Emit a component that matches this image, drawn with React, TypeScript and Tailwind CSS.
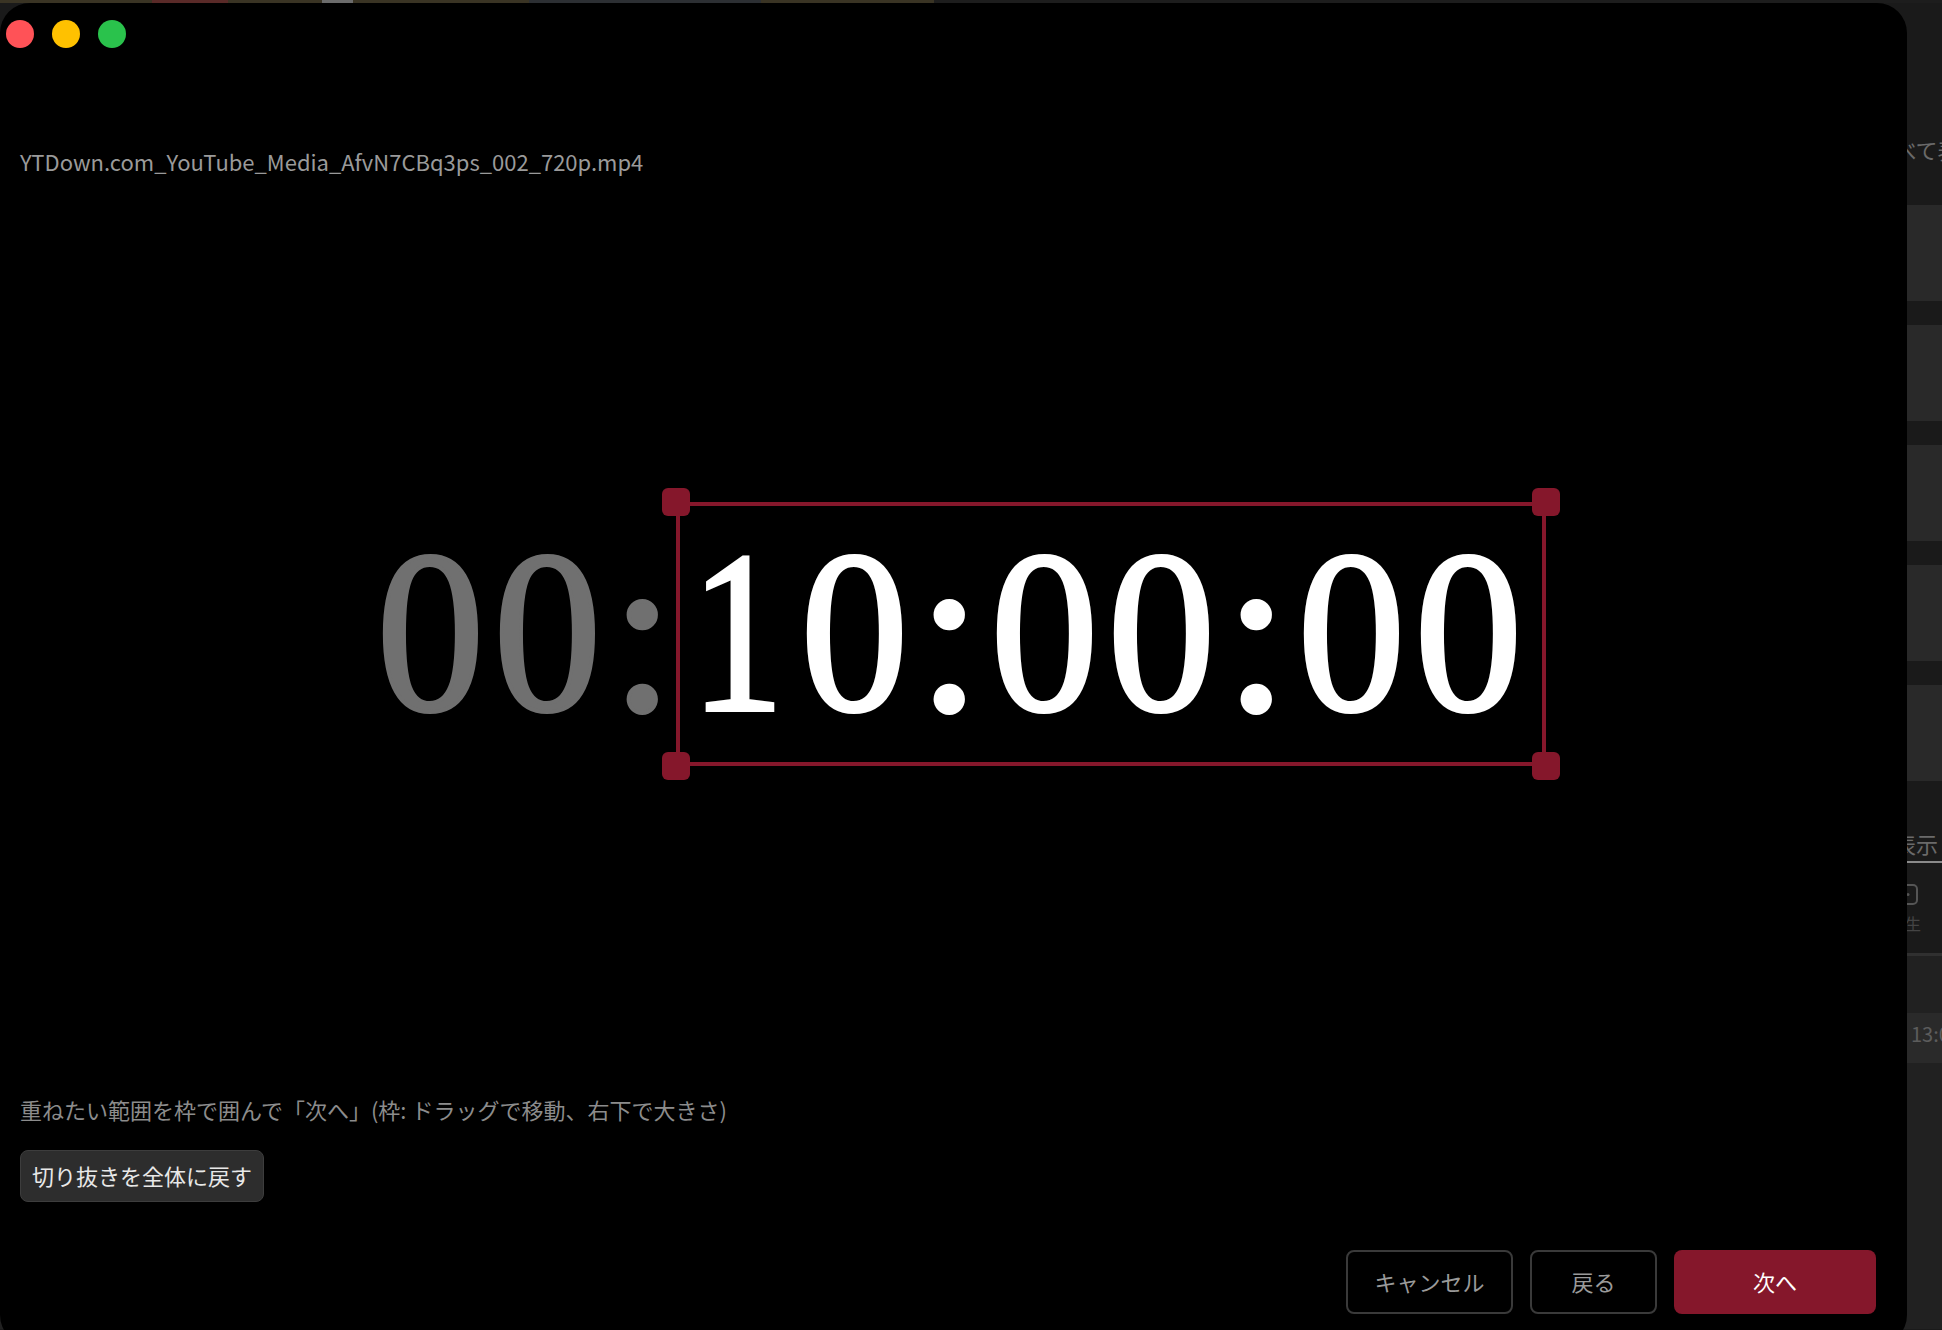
import React from "react";

const jp = "font-['Noto_Sans_CJK_JP','Noto_Sans',sans-serif]";

function Colon({ dim }: { dim?: boolean }) {
  return (
    <span className={`inline-block w-[73px] text-center [-webkit-text-stroke:4px_currentColor] ${dim ? "text-[#707070]" : "text-white"}`}>:</span>
  );
}

function Digit({ children, dim }: { children: string; dim?: boolean }) {
  return (
    <span className={`inline-block w-[117px] text-center ${children === "1" ? "scale-x-[0.8]" : "scale-x-[0.93]"} ${dim ? "text-[#707070]" : "text-white"}`}>
      {children}
    </span>
  );
}

function Handle({ className }: { className: string }) {
  return <div className={`absolute h-7 w-7 rounded-md bg-[#85172b] ${className}`} />;
}

function BackgroundApp() {
  return (
    <div className={`h-full w-full bg-[#1a1a1a] ${jp}`}>
      <div className="flex h-[3px] w-full bg-[#1d1d1d]">
        <div className="flex h-full w-[934px] bg-[#3a3424]">
          <div className="ml-[152px] h-full w-[76px] bg-[#5a2a28]" />
          <div className="ml-[94px] h-full w-[31px] bg-[#6b6b6b]" />
          <div className="ml-[176px] h-full w-[232px] bg-[#2c2f33]" />
        </div>
      </div>
      <div className="h-[202px] overflow-hidden whitespace-nowrap pl-[1874px] pt-[130px] text-[22px] leading-[32px] text-[#6a6a6a]">
        すべて表示
      </div>
      <div className="flex flex-col gap-6">
        <div className="h-24 bg-[#292929]" />
        <div className="h-24 bg-[#292929]" />
        <div className="h-24 bg-[#292929]" />
        <div className="h-24 bg-[#292929]" />
        <div className="h-24 bg-[#292929]" />
      </div>
      <div className="h-[175px] overflow-hidden whitespace-nowrap border-b-[3px] border-[#303030]">
        <div className="h-[82px] w-full overflow-hidden border-b-[2px] border-[#8a8a8a] pr-[4px] pt-[46px] text-right text-[22px] leading-[32px] text-[#6a6a6a]">
          を表示
        </div>
        <div className="pl-[1895px] pt-[21px]">
          <svg width="23" height="21" viewBox="0 0 23 21" fill="none" className="block">
            <rect x="1" y="1" width="21" height="19" rx="4" stroke="#555" strokeWidth="2" />
            <circle cx="13" cy="10.5" r="1.5" fill="#555" />
          </svg>
        </div>
        <div className="pl-[1889px] pt-[6px] text-[16px] leading-[24px] text-[#444]">誕生</div>
      </div>
      <div className="h-[373px] bg-[#212121] pt-[57px]">
        <div className="h-[50px] whitespace-nowrap bg-[#2a2a2a] pl-[1911px] text-[20px] leading-[42px] text-[#5c5c5c]">13:00</div>
      </div>
    </div>
  );
}

export default function App() {
  return (
    <div className="relative h-[1330px] w-[1942px] overflow-hidden">
      <BackgroundApp />
      <div className={`absolute left-0 top-[3px] flex h-[1342px] w-[1907px] flex-col rounded-[30px] bg-black ${jp}`}>
        <div className="flex gap-[18px] pl-[6px] pt-[17px]">
          <div className="h-7 w-7 rounded-full bg-[#ff5257]" />
          <div className="h-7 w-7 rounded-full bg-[#ffc100]" />
          <div className="h-7 w-7 rounded-full bg-[#2ac24c]" />
        </div>
        <div className="pl-5 pt-[95px] text-[22px] leading-[36px] text-[#9a9a9a]">YTDown.com_YouTube_Media_AfvN7CBq3ps_002_720p.mp4</div>

        <div className="relative mt-[323px] h-[264px]">
          <div className="flex h-full items-center whitespace-nowrap pb-[5px] pl-[372px] font-['Liberation_Serif',serif] text-[232px] leading-none text-white [-webkit-text-stroke:4px_currentColor]">
            <Digit dim>0</Digit>
            <Digit dim>0</Digit>
            <Colon dim />
            <Digit>1</Digit>
            <Digit>0</Digit>
            <Colon />
            <Digit>0</Digit>
            <Digit>0</Digit>
            <Colon />
            <Digit>0</Digit>
            <Digit>0</Digit>
          </div>
          <div className="absolute left-[676px] top-0 h-[264px] w-[870px] border-4 border-[#85172b]">
            <Handle className="-left-[18px] -top-[18px]" />
            <Handle className="-right-[18px] -top-[18px]" />
            <Handle className="-bottom-[18px] -left-[18px]" />
            <Handle className="-bottom-[18px] -right-[18px]" />
          </div>
        </div>

        <div className="pl-5 pt-[326px] text-[22px] leading-[34px] text-[#8c8c8c]">
          重ねたい範囲を枠で囲んで「次へ」(枠: ドラッグで移動、右下で大きさ)
        </div>
        <div className="pl-5 pt-[24px]">
          <button className="flex h-[52px] w-[244px] items-center justify-center rounded-lg border border-[#3d3d3d] bg-[#2d2d2d] pb-[2px] text-[22px] text-[#e8e8e8]">
            切り抜きを全体に戻す
          </button>
        </div>
        <div className="flex justify-end gap-[17px] pr-[31px] pt-[48px]">
          <button className="h-[64px] w-[167px] rounded-lg border-2 border-[#3a3a3a] pb-[2px] text-[22px] text-[#9a9a9a]">キャンセル</button>
          <button className="h-[64px] w-[127px] rounded-lg border-2 border-[#3a3a3a] pb-[2px] text-[22px] text-[#9a9a9a]">戻る</button>
          <button className="h-[64px] w-[202px] rounded-lg bg-[#85172b] pb-[2px] text-[22px] text-white">次へ</button>
        </div>
      </div>
    </div>
  );
}
